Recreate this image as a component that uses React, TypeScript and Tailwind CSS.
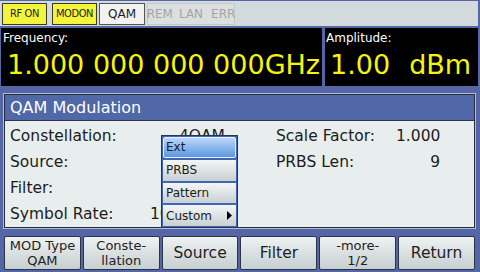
import React from 'react';

const font = "font-['DejaVu_Sans',sans-serif]";

function StatusBox({ label, on }: { label: string; on?: boolean }) {
  return (
    <div className={`h-[22px] w-[45px] flex items-center justify-center border border-[#3a3a2a] text-[11px] text-[#222] font-['DejaVu_Sans_Condensed','DejaVu_Sans',sans-serif] ${on ? 'bg-[#f4f43c]' : 'bg-[#f0f0f0]'}`}>
      <span className="tracking-[-0.4px]">{label}</span>
    </div>
  );
}

function SoftKey({ top, bottom }: { top: string; bottom?: string }) {
  return (
    <div className="flex-1 h-[34px] flex flex-col items-center justify-center border border-[#2c3446] rounded-[2px] bg-gradient-to-b from-[#eef2f2] to-[#c6cfd1] text-[#1e1e1e]">
      {bottom ? (
        <>
          <span className="text-[13px] leading-[15px]">{top}</span>
          <span className="text-[13px] leading-[15px]">{bottom}</span>
        </>
      ) : (
        <span className="text-[15.5px] leading-[18px]">{top}</span>
      )}
    </div>
  );
}

function Row({ label, value, rLabel, rValue, left }: { label: string; value: string; rLabel?: string; rValue?: string; left?: boolean }) {
  return (
    <div className="flex h-[26px] items-center text-[15.5px] leading-[26px] text-[#1c1c1c]">
      <span className="w-[140px] pl-[5px] shrink-0">{label}</span>
      <span className={`w-[80px] shrink-0 whitespace-nowrap ${left ? 'text-left pl-[5px]' : 'text-right'}`}>{value}</span>
      <span className="w-[51px] shrink-0" />
      <span className="w-[120px] shrink-0">{rLabel}</span>
      <span className="w-[44px] text-right shrink-0">{rValue}</span>
    </div>
  );
}

export default function App() {
  return (
    <div className={`relative w-[480px] h-[272px] overflow-hidden bg-[#5566a6] flex flex-col ${font}`}>
      {/* status bar */}
      <div className="mt-[1px] mr-[2px] h-[25px] bg-[#d3dadd] flex items-start gap-[2px] pl-[2px] pt-[2px]">
        <StatusBox label="RF ON" on />
        <div className="w-[1px]" />
        <StatusBox label="MODON" on />
        <div className="h-[22px] w-[46px] flex items-center justify-center border border-[#555] bg-[#f2f2f2] text-[12px] text-[#1c1c1c]">QAM</div>
        <div className="h-[22px] w-[88px] flex items-center justify-center gap-[6px] border border-[#c4c8ca] bg-[#dcdfe0] text-[12px] text-[#a2a5a7]">
          <span>REM</span>
          <span>LAN</span>
          <span className="ml-[2px]">ERR</span>
        </div>
      </div>

      {/* readouts */}
      <div className="mt-[2px] h-[58px] flex gap-[3px] pl-[1px] pr-[2px]">
        <div className="w-[321px] bg-black flex flex-col">
          <span className="text-[12px] leading-[14px] text-white pl-[2px] pt-[3px]">Frequency:</span>
          <span className="text-[27px] leading-[32px] text-[#f5f50a] pl-[6px] pt-[4px] whitespace-pre">1.000 000 000 000GHz</span>
        </div>
        <div className="flex-1 bg-black flex flex-col">
          <span className="text-[12px] leading-[14px] text-white pl-[1px] pt-[3px]">Amplitude:</span>
          <div className="flex text-[27px] leading-[32px] text-[#f5f50a] pl-[5px] pt-[4px]">
            <span>1.00</span>
            <span className="ml-[19px]">dBm</span>
          </div>
        </div>
      </div>

      {/* QAM panel */}
      <div className="mt-[7px] ml-[3px] w-[473px] h-[136px] border border-[#b4bdd2]">
        <div className="h-full border border-[#262c3a] flex flex-col bg-[#e8eeee]">
          <div className="h-[27px] bg-[#5068a8] border-b border-[#2c3448] flex items-center pl-[5px] text-[16px] text-white">
            QAM Modulation
          </div>
          <div className="pt-[2px] flex flex-col">
            <Row label="Constellation:" value="4QAM" rLabel="Scale Factor:" rValue="1.000" />
            <Row label="Source:" value="" rLabel="PRBS Len:" rValue="9" />
            <Row label="Filter:" value="" />
            <Row label="Symbol Rate:" value="10.00000" left />
          </div>
        </div>
      </div>

      {/* soft keys */}
      <div className="mt-[7px] ml-[4px] mr-[5px] flex gap-[2px]">
        <SoftKey top="MOD Type" bottom="QAM" />
        <SoftKey top="Conste-" bottom="llation" />
        <SoftKey top="Source" />
        <SoftKey top="Filter" />
        <SoftKey top="-more-" bottom="1/2" />
        <SoftKey top="Return" />
      </div>

      {/* popup menu */}
      <div className="absolute left-[161px] top-[135px] w-[77px] h-[93px] border border-[#2a3550] bg-[#4166b8] p-[1px] flex flex-col gap-[2px] text-[12px] text-[#1c1c1c]">
        <div className="h-[21px] flex items-center pl-[2px] rounded-[2px] border border-[#e8f0fc] bg-gradient-to-b from-[#bcd6f6] to-[#5a98e0] text-[#142238]">Ext</div>
        <div className="h-[21px] flex items-center pl-[3px] bg-gradient-to-b from-[#f4f6f6] to-[#c8d0d2]">PRBS</div>
        <div className="h-[21px] flex items-center pl-[3px] bg-gradient-to-b from-[#f4f6f6] to-[#c8d0d2]">Pattern</div>
        <div className="h-[21px] flex items-center justify-between pl-[3px] pr-[4px] bg-gradient-to-b from-[#f4f6f6] to-[#c8d0d2]">
          <span>Custom</span>
          <svg width="5" height="9" viewBox="0 0 5 9">
            <path d="M0 0 L5 4.5 L0 9 Z" fill="#000" />
          </svg>
        </div>
      </div>
    </div>
  );
}
